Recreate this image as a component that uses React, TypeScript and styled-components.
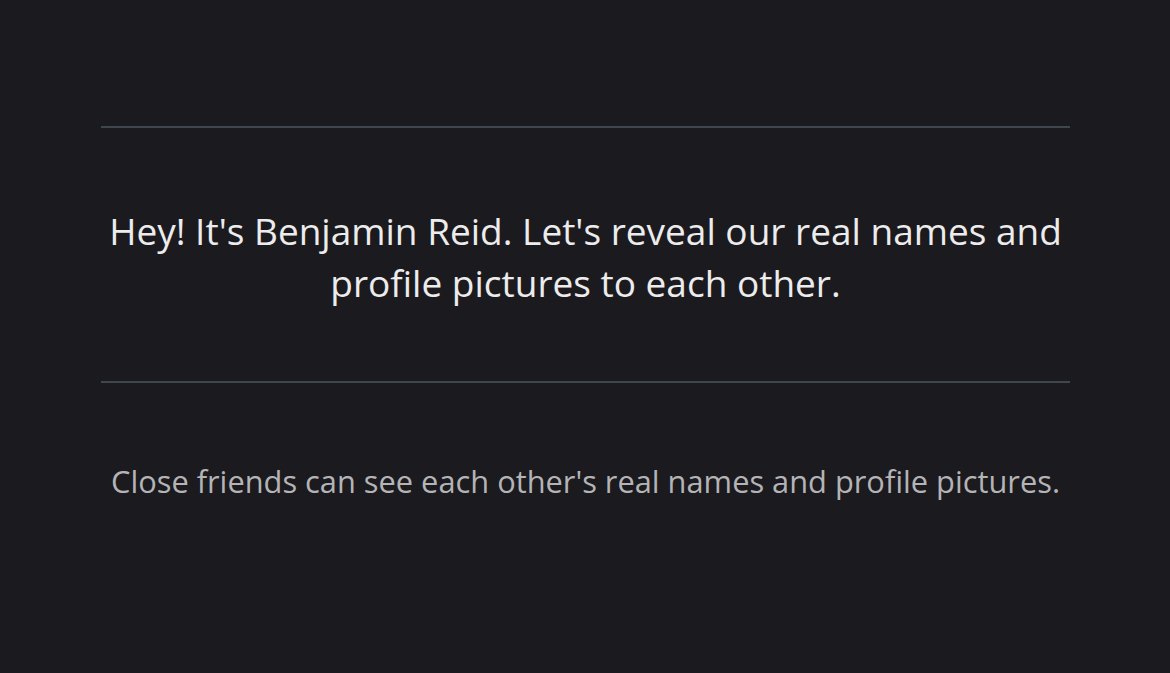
import React from "react";
import styled, { createGlobalStyle } from "styled-components";

const Global = createGlobalStyle`
  html, body { margin: 0; padding: 0; background: #1b1a1f; }
  body { font-family: "Open Sans", "Noto Sans", sans-serif; }
`;

const Page = styled.div`
  width: 1170px;
  height: 673px;
  background: #1b1a1f;
  box-sizing: border-box;
  padding: 126px 100px 0 101px;
  display: flex;
  flex-direction: column;
`;

const Divider = styled.div`
  height: 2px;
  background: #3f464e;
`;

const Message = styled.p`
  margin: 0;
  padding: 77px 0 72px;
  text-align: center;
  color: #ececec;
  font-size: 37px;
  line-height: 52px;
  white-space: nowrap;
`;

const Note = styled.p`
  margin: 0;
  padding-top: 78px;
  text-align: center;
  color: #b4b4b6;
  font-size: 30.8px;
  line-height: 40px;
  white-space: nowrap;
`;

export default function App() {
  return (
    <>
      <Global />
      <Page>
        <Divider />
        <Message>
          Hey! It's Benjamin Reid. Let's reveal our real names and
          <br />
          profile pictures to each other.
        </Message>
        <Divider />
        <Note>Close friends can see each other's real names and profile pictures.</Note>
      </Page>
    </>
  );
}
